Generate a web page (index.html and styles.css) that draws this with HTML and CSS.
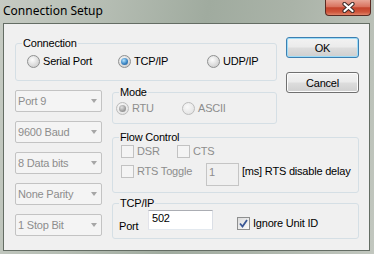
FILE: index.html
```html
<!doctype html>
<html lang="en">
<head>
    <meta charset="UTF-8">
    <title>Connection Setup</title>
    <link rel="stylesheet" href="styles.css">
</head>
<body>
<div class="window">
    <div class="titlebar">
        <span class="title">Connection Setup</span>
        <span class="close">
            <svg width="13" height="11" viewBox="0 0 13 11">
                <path d="M2.5 2 L10.5 9 M10.5 2 L2.5 9" stroke="#3b2a28" stroke-width="4.2" stroke-linecap="round"/>
                <path d="M2.5 2 L10.5 9 M10.5 2 L2.5 9" stroke="#fff" stroke-width="2.2" stroke-linecap="round"/>
            </svg>
        </span>
    </div>
    <div class="client">
        <!-- connection type -->
        <fieldset class="group conn">
            <legend>Connection</legend>
            <div class="radios conn-radios">
                <label class="opt"><span class="radio"></span>Serial Port</label>
                <label class="opt"><span class="radio on"></span>TCP/IP</label>
                <label class="opt"><span class="radio"></span>UDP/IP</label>
            </div>
        </fieldset>

        <div class="buttons">
            <button class="btn default">OK</button>
            <button class="btn">Cancel</button>
        </div>

        <!-- serial settings, disabled while TCP/IP is picked -->
        <div class="combos">
            <div class="combo">Port 9<span class="arrow"></span></div>
            <div class="combo">9600 Baud<span class="arrow"></span></div>
            <div class="combo">8 Data bits<span class="arrow"></span></div>
            <div class="combo">None Parity<span class="arrow"></span></div>
            <div class="combo">1 Stop Bit<span class="arrow"></span></div>
        </div>

        <fieldset class="group mode">
            <legend>Mode</legend>
            <div class="radios mode-radios">
                <label class="opt off"><span class="radio on"></span>RTU</label>
                <label class="opt off"><span class="radio"></span>ASCII</label>
            </div>
        </fieldset>

        <fieldset class="group flow">
            <legend>Flow Control</legend>
            <div class="flow-row1">
                <label class="opt off"><span class="box"></span>DSR</label>
                <label class="opt off"><span class="box"></span>CTS</label>
            </div>
            <div class="flow-row2">
                <label class="opt off rts"><span class="box"></span>RTS Toggle</label>
                <input class="edit small" type="text" value="1" disabled>
                <span class="delay">[ms] RTS disable delay</span>
            </div>
        </fieldset>

        <fieldset class="group tcp">
            <legend>TCP/IP</legend>
            <div class="tcp-row">
                <span class="port-label">Port</span>
                <input class="edit port" type="text" value="502">
                <label class="opt ignore"><span class="box checked">
                    <svg width="11" height="11" viewBox="0 0 11 11"><path d="M2 5.5 L4.5 8.5 L9 2" fill="none" stroke="#3a5795" stroke-width="1.8"/></svg>
                </span>Ignore Unit ID</label>
            </div>
        </fieldset>
    </div>
</div>
</body>
</html>
```

FILE: styles.css
```css
body{
    margin: 0;
    font-family: "Liberation Sans", Arial, sans-serif;
    font-size: 11px;
    letter-spacing: -0.2px;
    color: #000;
}
.window{
    width: 374px;
    height: 254px;
    display: flex;
    flex-direction: column;
    background: linear-gradient(100deg, #c6cbc3 0%, #b5bdb3 25%, #a0ab9f 50%, #aab3a8 70%, #c2c7bf 100%);
}
.titlebar{
    height: 23px;
    display: flex;
    justify-content: space-between;
    align-items: flex-start;
}
.title{
    font-family: "Noto Sans", sans-serif;
    font-size: 12px;
    letter-spacing: 0;
    line-height: 16px;
    margin: 3px 0 0 3px;
}
.close{
    width: 46px;
    height: 16px;
    margin-right: 3px;
    box-sizing: border-box;
    border: 1px solid #5a2a22;
    border-top: none;
    border-radius: 0 0 4px 4px;
    background: linear-gradient(#e8a596, #d9735f 45%, #c4432c 52%, #cf553b 80%, #e08469);
    display: flex;
    align-items: center;
    justify-content: center;
}
.client{
    margin: 0 4px 0 3px;
    height: 228px;
    box-sizing: border-box;
    border: 1px solid #646d64;
    background: #f0f0f0;
    padding: 13px 0 0 11px;
    display: grid;
    grid-template-columns: 87px 10px 165px 9px 73px;
    grid-template-rows: 49px 45px 66px 42px;
    align-items: start;
}

/* group boxes */
.group{
    margin: 0;
    padding: 0;
    min-width: 0;
    box-sizing: border-box;
    border: 1px solid #d5dfe5;
    border-radius: 3px;
}
.group legend{
    margin-left: 6px;
    padding: 0 1px;
    line-height: 13px;
}
.conn{
    grid-column: 1 / 4;
    grid-row: 1;
    height: 44px;
}
.mode{
    grid-column: 3;
    grid-row: 2;
    height: 38px;
}
.flow{
    grid-column: 3 / 6;
    grid-row: 3;
    height: 62px;
}
.tcp{
    grid-column: 3 / 6;
    grid-row: 4;
    height: 42px;
}

/* radios and checkboxes */
.opt{
    display: flex;
    align-items: center;
    gap: 3px;
    line-height: 13px;
    white-space: nowrap;
}
.opt.off{
    color: #8d8d8d;
}
.radios{
    display: grid;
}
.conn-radios{
    grid-template-columns: 91px 89px auto;
    margin: 5px 0 0 11px;
}
.mode-radios{
    grid-template-columns: 66px auto;
    margin: 3px 0 0 3px;
}
.radio{
    flex: none;
    width: 13px;
    height: 13px;
    box-sizing: border-box;
    border-radius: 50%;
    border: 1px solid #8f9090;
    background: radial-gradient(circle at 40% 35%, #fdfdfd, #dadada 60%, #c4c4c4);
    display: flex;
    align-items: center;
    justify-content: center;
}
.radio.on::after{
    content: "";
    width: 7px;
    height: 7px;
    border-radius: 50%;
    background: radial-gradient(circle at 40% 35%, #b5e4ff, #3b86c4 55%, #1c4f87);
}
.off .radio{
    border-color: #bcbcbc;
    background: radial-gradient(circle at 40% 35%, #fafafa, #e6e6e6 70%, #d8d8d8);
}
.off .radio.on::after{
    background: radial-gradient(circle at 40% 35%, #e0e0e0, #9c9c9c 60%, #858585);
}
.box{
    flex: none;
    width: 13px;
    height: 13px;
    box-sizing: border-box;
    border: 1px solid #8e8f8f;
    background: linear-gradient(135deg, #dcdcdc, #fbfbfb);
    display: flex;
    align-items: center;
    justify-content: center;
}
.off .box{
    border-color: #c2c2c2;
    background: #f4f4f4;
}

/* flow control rows */
.flow-row1{
    display: grid;
    grid-template-columns: 56px auto;
    margin: 1px 0 0 8px;
}
.flow-row2{
    display: flex;
    align-items: flex-start;
    margin: 7px 0 0 8px;
}
.rts{
    width: 85px;
}
.delay{
    line-height: 13px;
    margin-left: 3px;
}

/* text fields */
.edit{
    box-sizing: border-box;
    font: inherit;
    letter-spacing: inherit;
    line-height: 13px;
    border: 1px solid #abadb3;
    border-color: #abadb3 #dbdfe6 #e3e9ef #e2e3ea;
    background: #fff;
    color: #000;
    padding: 1px 3px;
    margin: 0;
    outline: none;
}
.edit.small{
    width: 33px;
    height: 23px;
    margin-top: -2px;
    padding: 0 2px 6px;
    background: #f0f0f0;
    border-color: #c5c5c5;
    color: #8d8d8d;
}
.tcp-row{
    display: flex;
    align-items: flex-start;
    margin-left: 6px;
}
.port-label{
    width: 29px;
    line-height: 13px;
    margin-top: 10px;
}
.edit.port{
    width: 65px;
    height: 20px;
    padding: 0 3px 4px;
}
.ignore{
    margin: 7px 0 0 24px;
}

/* buttons */
.buttons{
    grid-column: 5;
    grid-row: 1 / 3;
    display: flex;
    flex-direction: column;
    gap: 14px;
}
.btn{
    width: 73px;
    height: 21px;
    font: inherit;
    letter-spacing: inherit;
    color: #000;
    border: 1px solid #707070;
    border-radius: 3px;
    background: linear-gradient(#f2f2f2 0%, #ebebeb 48%, #dddddd 52%, #cfcfcf 100%);
    box-shadow: inset 0 0 0 1px #fcfcfc;
    padding: 0;
}
.btn.default{
    border-color: #3c7fb1;
    box-shadow: inset 0 0 0 1px #9ddcf8;
}

/* serial combos */
.combos{
    grid-column: 1;
    grid-row: 2 / 5;
    margin-top: 4px;
    display: flex;
    flex-direction: column;
    gap: 9px;
}
.combo{
    height: 22px;
    box-sizing: border-box;
    border: 1px solid #c3c3c3;
    border-radius: 2px;
    background: #f4f4f4;
    color: #8d8d8d;
    line-height: 13px;
    display: flex;
    align-items: center;
    justify-content: space-between;
    padding: 0 4px 0 2px;
}
.arrow{
    width: 0;
    height: 0;
    border-left: 3px solid transparent;
    border-right: 3px solid transparent;
    border-top: 4px solid #a6a6a6;
}
```
